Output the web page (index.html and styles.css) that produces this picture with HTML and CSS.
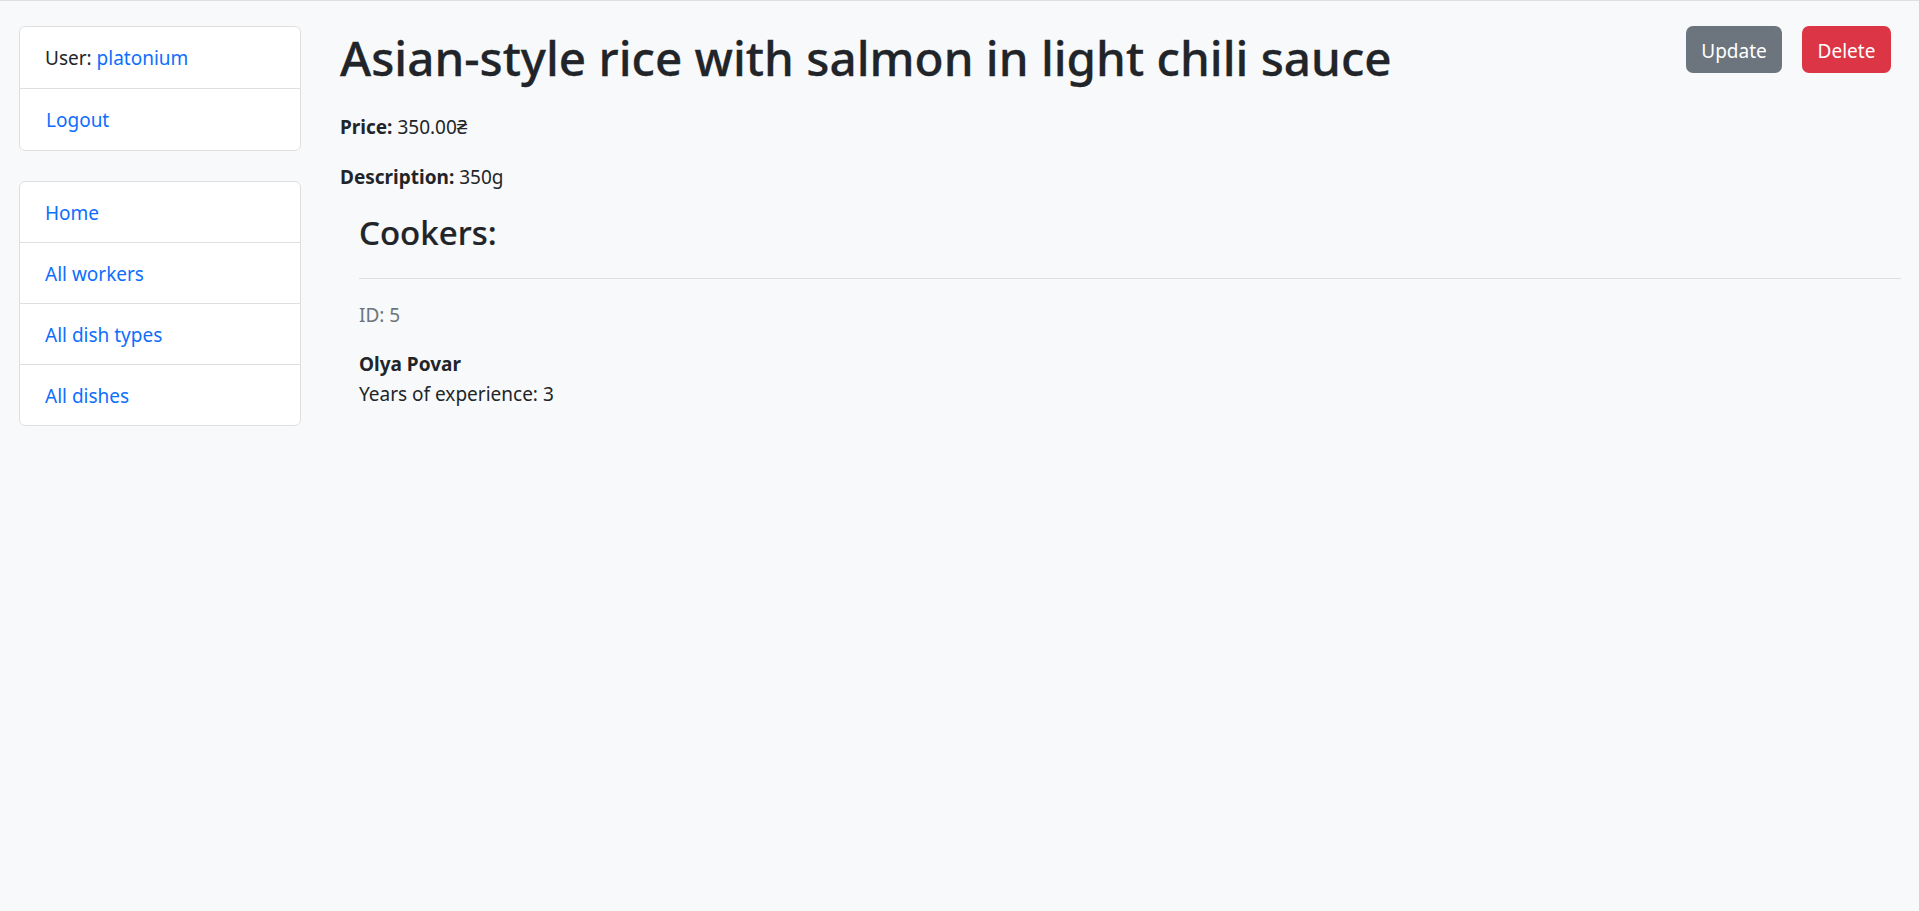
FILE: index.html
```html
<!DOCTYPE html>
<html lang="en">
<head>
<meta charset="utf-8">
<title>Dish detail</title>
<link rel="stylesheet" href="styles.css">
</head>
<body>
<div class="layout">
  <aside class="sidebar">
    <ul class="list-card list-card-user">
      <li class="list-item">User: <a href="#" class="link">platonium</a></li>
      <li class="list-item"><a href="#" class="link nav-link">Logout</a></li>
    </ul>
    <ul class="list-card">
      <li class="list-item"><a href="#" class="link">Home</a></li>
      <li class="list-item"><a href="#" class="link">All workers</a></li>
      <li class="list-item"><a href="#" class="link">All dish types</a></li>
      <li class="list-item"><a href="#" class="link">All dishes</a></li>
    </ul>
  </aside>
  <main class="content">
    <div class="header">
      <h1 class="title">Asian-style rice with salmon in light chili sauce</h1>
      <div class="actions">
        <a href="#" class="btn btn-secondary">Update</a>
        <a href="#" class="btn btn-danger">Delete</a>
      </div>
    </div>
    <p class="field field-first"><strong>Price:</strong> 350.00₴</p>
    <p class="field"><strong>Description:</strong> 350g</p>
    <section class="cookers">
      <h3 class="cookers-title">Cookers:</h3>
      <hr class="divider">
      <p class="muted">ID: 5</p>
      <p class="cooker"><strong>Olya Povar</strong><br>Years of experience: 3</p>
    </section>
  </main>
</div>
</body>
</html>
```
FILE: styles.css
```css
* { box-sizing: border-box; }

body {
  margin: 0;
  border-top: 1px solid #dedfe0;
  background: #f8f9fa;
  color: #212529;
  font-family: "Noto Sans", "Open Sans", sans-serif;
  font-size: 19px;
  line-height: 30px;
  min-height: 911px;
}

.layout {
  display: flex;
  padding: 0 18px 0 19px;
  gap: 39px;
}

.sidebar {
  width: 282px;
  flex: 0 0 282px;
  padding-top: 25px;
  display: flex;
  flex-direction: column;
  gap: 30px;
}

.list-card {
  list-style: none;
  margin: 0;
  padding: 0;
  background: #fff;
  border: 1px solid #dfdfdf;
  border-radius: 6px;
}

.list-item {
  display: flex;
  align-items: center;
  height: 61px;
  padding: 1px 25px 0;
  border-top: 1px solid #dfdfdf;
  white-space: pre;
}

.list-item:first-child {
  border-top: none;
  height: 60px;
}

.list-card-user .list-item { height: 62px; }
.list-card-user .list-item:first-child { height: 61px; }

.link {
  color: #0d6efd;
  text-decoration: none;
}

.nav-link { padding-left: 1px; }

.content {
  flex: 1;
  min-width: 0;
}

.header {
  display: flex;
  justify-content: space-between;
  align-items: flex-start;
}

.title {
  margin: 0;
  padding-top: 27px;
  font-size: 47.6px;
  line-height: 60px;
  font-weight: 500;
  -webkit-text-stroke: 0.3px #212529;
}

.actions {
  display: flex;
  gap: 20px;
  margin-top: 25px;
  margin-right: 10px;
}

.btn {
  display: inline-block;
  height: 47px;
  padding: 10px 0 7px;
  border-radius: 7px;
  color: #fff;
  text-decoration: none;
  text-align: center;
  font-size: 19px;
  line-height: 30px;
}

.btn-secondary { background: #6c757d; width: 96px; }
.btn-danger { background: #dc3545; width: 89px; }

.field {
  margin: 0 0 20px;
}

.field-first { margin-top: 24px; }

.field strong { font-weight: 700; }

.cookers {
  margin-left: 19px;
}

.cookers-title {
  margin: 0;
  font-size: 33px;
  line-height: 42px;
  font-weight: 500;
  -webkit-text-stroke: 0.2px #212529;
}

.divider {
  margin: 24px 0 21px;
  border: none;
  border-top: 1px solid #dcdfe2;
  height: 0;
}

.muted {
  margin: 0 0 19px;
  color: #6c757d;
}

.cooker {
  margin: 0;
}
```
